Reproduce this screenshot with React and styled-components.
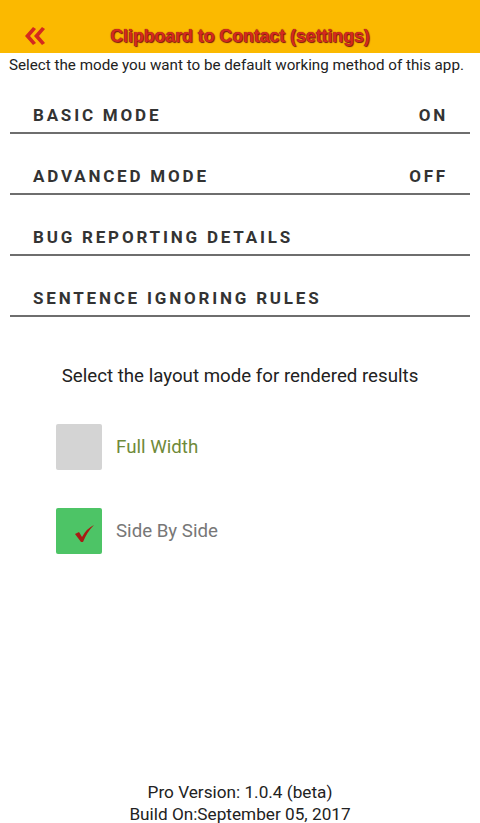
import React, { useState } from 'react'
import styled, { createGlobalStyle } from 'styled-components'

const GlobalStyle = createGlobalStyle`
  html, body { margin: 0; padding: 0; background: #fff; }
  body { font-family: Roboto, "Liberation Sans", Arial, sans-serif; }
`

const Page = styled.div`
  min-height: 823px;
  display: flex;
  flex-direction: column;
`

const Header = styled.header`
  height: 53px;
  background: #fbb900;
  display: flex;
  align-items: center;
  padding-top: 19px;
  box-sizing: border-box;
`

const BackButton = styled.button`
  border: 0;
  background: none;
  padding: 0;
  margin-left: 23px;
  width: 24px;
  height: 20px;
  display: flex;
  cursor: pointer;
`

const Title = styled.h1`
  flex: 1;
  margin: 0 0 0 -47px;
  text-align: center;
  font-family: "Liberation Sans", Arial, sans-serif;
  font-weight: 700;
  font-size: 17.7px;
  color: #d42a1e;
  text-shadow: 0 0 1px #6a120c, 1px 1px 1px #7a1a10;
`

const Intro = styled.p`
  margin: 4px 0 0 9px;
  font-size: 15.2px;
  color: #222;
  line-height: 17px;
`

const Menu = styled.div`
  margin: 0 10px;
  display: flex;
  flex-direction: column;
`

const Row = styled.div`
  height: 61px;
  box-sizing: border-box;
  border-bottom: 2px solid #6e6e6e;
  display: flex;
  justify-content: space-between;
  align-items: flex-end;
  padding: 0 22px 7px 23px;
  font-weight: 700;
  font-size: 17px;
  letter-spacing: 2.8px;
  color: #333;
  &:first-child { height: 60px; }
`

const Layout = styled.section`
  margin-top: 48px;
  display: flex;
  flex-direction: column;
`

const LayoutTitle = styled.p`
  margin: 0;
  text-align: center;
  font-size: 18.7px;
  color: #222;
`

const Options = styled.div`
  margin: 37px 0 0 56px;
  display: flex;
  flex-direction: column;
  gap: 38px;
`

const Option = styled.label`
  display: flex;
  align-items: center;
  gap: 14px;
  cursor: pointer;
`

const Box = styled.span`
  width: 46px;
  height: 46px;
  border-radius: 2px;
  background: ${p => (p.$checked ? '#4dc466' : '#d4d4d4')};
  display: flex;
  align-items: center;
  justify-content: center;
`

const OptionText = styled.span`
  font-size: 18.7px;
  color: ${p => p.$color};
`

const Footer = styled.footer`
  margin-top: auto;
  margin-bottom: -2px;
  text-align: center;
  font-size: 17.2px;
  line-height: 22px;
  color: #222;
`

function Check() {
  return (
    <svg width="22" height="20" viewBox="0 0 22 20" style={{ marginLeft: 10, marginTop: 6 }}>
      <path d="M2 10 L6 8 L9 13 Q14 4 21 1 Q14 8 10 18 L8 18 Z" fill="#a81c14" />
    </svg>
  )
}

export default function App() {
  const [mode, setMode] = useState('side')

  return (
    <Page>
      <GlobalStyle />
      <Header>
        <BackButton aria-label="Back">
          <svg width="22" height="20" viewBox="0 0 22 20">
            <path d="M10 1 L2 10 L10 19 L13 17 L7 10 L13 3 Z" fill="#d42a1e" />
            <path d="M19 1 L11 10 L19 19 L22 17 L16 10 L22 3 Z" fill="#d42a1e" />
          </svg>
        </BackButton>
        <Title>Clipboard to Contact (settings)</Title>
      </Header>
      <Intro>Select the mode you want to be default working method of this app.</Intro>

      <Menu>
        <Row><span>BASIC MODE</span><span>ON</span></Row>
        <Row><span>ADVANCED MODE</span><span>OFF</span></Row>
        <Row><span>BUG REPORTING DETAILS</span></Row>
        <Row><span>SENTENCE IGNORING RULES</span></Row>
      </Menu>

      <Layout>
        <LayoutTitle>Select the layout mode for rendered results</LayoutTitle>
        <Options>
          <Option onClick={() => setMode('full')}>
            <Box $checked={mode === 'full'}>{mode === 'full' && <Check />}</Box>
            <OptionText $color="#6f8a3a">Full Width</OptionText>
          </Option>
          <Option onClick={() => setMode('side')}>
            <Box $checked={mode === 'side'}>{mode === 'side' && <Check />}</Box>
            <OptionText $color="#777">Side By Side</OptionText>
          </Option>
        </Options>
      </Layout>

      <Footer>
        Pro Version: 1.0.4 (beta)<br />
        Build On:September 05, 2017
      </Footer>
    </Page>
  )
}
